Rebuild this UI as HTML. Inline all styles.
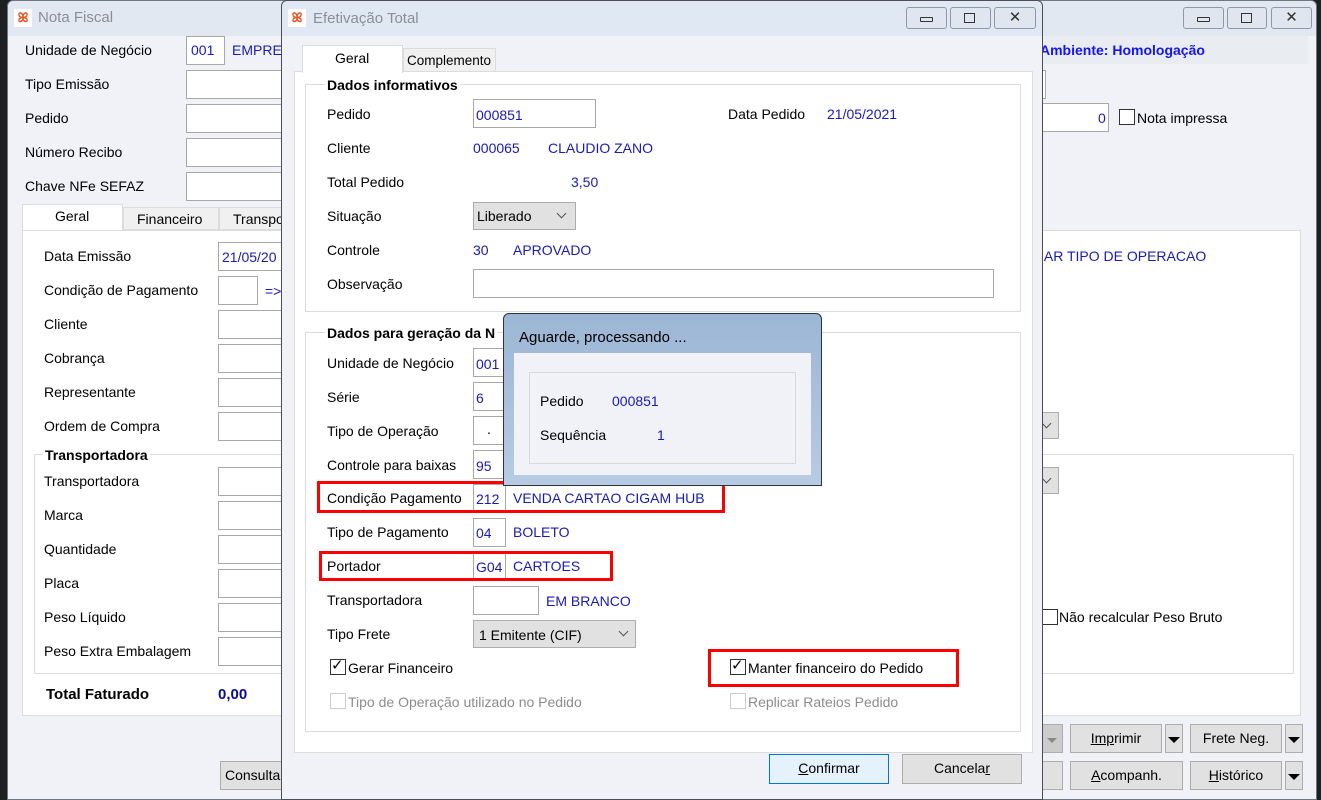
<!DOCTYPE html>
<html><head><meta charset="utf-8">
<style>
*{margin:0;padding:0;box-sizing:border-box}
body{width:1321px;height:800px;overflow:hidden;background:#1d1f22;font-family:"Liberation Sans",sans-serif;font-size:14px;color:#000;position:relative}
div{position:absolute}
.t{line-height:18px;white-space:nowrap}
.b{color:#1a1ab4}
.in{background:#fff;border:1px solid #a8a8a8}
.bt{background:#e1e1e1;border:1px solid #adadad;text-align:center;line-height:26px}
.cb{width:16px;height:16px;border:1px solid #333;background:#fff}
.red{border:3px solid #f00}
.grp{border:1px solid #dcdcdc}
.gt{font-weight:bold;background:#fff;padding:0 2px;line-height:18px}
.combo{background:#e1e1e1;border:1px solid #adadad}
.arr{width:7px;height:7px;border-right:1.5px solid #555;border-bottom:1.5px solid #555;transform:rotate(45deg)}
.dis{color:#8c8c8c}
.tri{width:0;height:0;border-left:6px solid transparent;border-right:6px solid transparent;border-top:6px solid #000}
</style></head><body>

<div style="left:7px;top:0;width:1310px;height:800px;background:#f0f2f8;border:1px solid #6f7780;border-radius:6px 6px 0 0"></div>
<div style="left:8px;top:1px;width:1308px;height:35px;background:#e1e8f2;border-radius:6px 6px 0 0"></div>
<div style="left:14px;top:9px;width:18px;height:18px;background:#fff;color:#e8501e;font-size:13px;font-weight:bold;text-align:center;line-height:18px">ꕤ</div>
<div class="t" style="left:38px;top:9px;color:#8a8f96;font-size:15px">Nota Fiscal</div>
<div style="left:1183px;top:7px;width:41px;height:22px;background:#dfe6ef;border:1px solid #8d99a8;border-radius:3px"><div style="left:13px;top:9px;width:13px;height:5px;border:1.5px solid #333;border-radius:1px"></div></div>
<div style="left:1227px;top:7px;width:40px;height:22px;background:#dfe6ef;border:1px solid #8d99a8;border-radius:3px"><div style="left:13px;top:5px;width:11px;height:10px;border:1.5px solid #333"></div></div>
<div style="left:1271px;top:7px;width:41px;height:22px;background:#dfe6ef;border:1px solid #8d99a8;border-radius:3px;text-align:center;font-size:15px;line-height:20px;color:#333">✕</div>

<div class="t" style="left:25px;top:41px">Unidade de Negócio</div>
<div class="t" style="left:25px;top:75px">Tipo Emissão</div>
<div class="t" style="left:25px;top:109px">Pedido</div>
<div class="t" style="left:25px;top:143px">Número Recibo</div>
<div class="t" style="left:25px;top:177px">Chave NFe SEFAZ</div>
<div class="in" style="left:186px;top:36px;width:39px;height:29px"></div>
<div class="t b" style="left:191px;top:41px">001</div>
<div class="t b" style="left:232px;top:41px">EMPRES</div>
<div class="in" style="left:186px;top:70px;width:100px;height:29px"></div>
<div class="in" style="left:186px;top:104px;width:100px;height:29px"></div>
<div class="in" style="left:186px;top:138px;width:100px;height:29px"></div>
<div class="in" style="left:186px;top:172px;width:100px;height:29px"></div>

<div style="left:1040px;top:36px;width:268px;height:28px;background:#e9ecf1"></div>
<div class="t" style="left:1040px;top:41px;color:#1414f0;font-weight:bold">Ambiente: Homologação</div>
<div class="in" style="left:1030px;top:70px;width:16px;height:29px"></div>
<div class="in" style="left:1030px;top:103px;width:79px;height:29px"></div>
<div class="t b" style="left:1098px;top:109px">0</div>
<div class="cb" style="left:1119px;top:109px"></div>
<div class="t" style="left:1137px;top:109px">Nota impressa</div>

<div style="left:22px;top:204px;width:101px;height:28px;background:#fff;border:1px solid #dcdcdc;border-bottom:none"></div>
<div class="t" style="left:55px;top:207px">Geral</div>
<div style="left:123px;top:207px;width:96px;height:23px;background:#f0f0f0;border:1px solid #dcdcdc"></div>
<div class="t" style="left:137px;top:210px">Financeiro</div>
<div style="left:219px;top:207px;width:70px;height:23px;background:#f0f0f0;border:1px solid #dcdcdc"></div>
<div class="t" style="left:233px;top:210px">Transpo</div>
<div style="left:22px;top:230px;width:1279px;height:486px;background:#fff;border:1px solid #dcdcdc"></div>

<div class="t" style="left:44px;top:247px">Data Emissão</div>
<div class="t" style="left:44px;top:281px">Condição de Pagamento</div>
<div class="t" style="left:44px;top:315px">Cliente</div>
<div class="t" style="left:44px;top:349px">Cobrança</div>
<div class="t" style="left:44px;top:383px">Representante</div>
<div class="t" style="left:44px;top:417px">Ordem de Compra</div>
<div class="in" style="left:218px;top:242px;width:70px;height:29px"></div>
<div class="t b" style="left:222px;top:248px">21/05/20</div>
<div class="in" style="left:218px;top:276px;width:40px;height:29px"></div>
<div class="t b" style="left:265px;top:282px">=></div>
<div class="in" style="left:218px;top:310px;width:70px;height:29px"></div>
<div class="in" style="left:218px;top:344px;width:70px;height:29px"></div>
<div class="in" style="left:218px;top:378px;width:70px;height:29px"></div>
<div class="in" style="left:218px;top:412px;width:70px;height:29px"></div>
<div class="t b" style="left:1040px;top:247px">IAR TIPO DE OPERACAO</div>
<div class="combo" style="left:1030px;top:412px;width:29px;height:27px"><div class="arr" style="left:12px;top:7px"></div></div>

<div class="grp" style="left:34px;top:454px;width:1260px;height:220px"></div>
<div class="gt" style="left:43px;top:446px">Transportadora</div>
<div class="combo" style="left:1030px;top:467px;width:29px;height:27px"><div class="arr" style="left:12px;top:7px"></div></div>
<div class="t" style="left:44px;top:472px">Transportadora</div>
<div class="t" style="left:44px;top:506px">Marca</div>
<div class="t" style="left:44px;top:540px">Quantidade</div>
<div class="t" style="left:44px;top:574px">Placa</div>
<div class="t" style="left:44px;top:608px">Peso Líquido</div>
<div class="t" style="left:44px;top:642px">Peso Extra Embalagem</div>
<div class="in" style="left:218px;top:467px;width:70px;height:29px"></div>
<div class="in" style="left:218px;top:501px;width:70px;height:29px"></div>
<div class="in" style="left:218px;top:535px;width:70px;height:29px"></div>
<div class="in" style="left:218px;top:569px;width:70px;height:29px"></div>
<div class="in" style="left:218px;top:603px;width:70px;height:29px"></div>
<div class="in" style="left:218px;top:637px;width:70px;height:29px"></div>
<div class="cb" style="left:1042px;top:609px"></div>
<div class="t" style="left:1059px;top:608px">Não recalcular Peso Bruto</div>
<div class="t" style="left:46px;top:686px;font-weight:bold;font-size:15px">Total Faturado</div>
<div class="t" style="left:218px;top:686px;font-weight:bold;color:#0a0a96;font-size:15px">0,00</div>

<div class="bt" style="left:220px;top:761px;width:80px;height:29px;text-align:left;padding-left:4px">Consulta</div>
<div class="bt" style="left:1030px;top:724px;width:33px;height:29px;background:#ccc"><div style="left:16px;top:13px;border-left:5px solid transparent;border-right:5px solid transparent;border-top:5px solid #888"></div></div>
<div class="bt" style="left:1070px;top:724px;width:92px;height:29px"><u>Imp</u>rimir</div>
<div class="bt" style="left:1165px;top:724px;width:18px;height:29px"><div class="tri" style="left:2px;top:12px"></div></div>
<div class="bt" style="left:1190px;top:724px;width:92px;height:29px">Frete Ne<u>g</u>.</div>
<div class="bt" style="left:1285px;top:724px;width:18px;height:29px"><div class="tri" style="left:2px;top:12px"></div></div>
<div class="bt" style="left:1030px;top:761px;width:33px;height:29px"></div>
<div class="bt" style="left:1070px;top:761px;width:113px;height:29px"><u>A</u>companh.</div>
<div class="bt" style="left:1190px;top:761px;width:92px;height:29px"><u>H</u>istórico</div>
<div class="bt" style="left:1285px;top:761px;width:18px;height:29px"><div class="tri" style="left:2px;top:12px"></div></div>

<!-- dialog -->
<div style="left:281px;top:0;width:762px;height:800px;background:#f0f2f8;border:1px solid #4b4f55;border-radius:6px 6px 0 0"></div>
<div style="left:282px;top:1px;width:760px;height:35px;background:#e0e8f3;border-radius:6px 6px 0 0"></div>
<div style="left:288px;top:9px;width:18px;height:18px;background:#fff;color:#e8501e;font-size:13px;font-weight:bold;text-align:center;line-height:18px">ꕤ</div>
<div class="t" style="left:313px;top:10px;color:#8a8f96;font-size:15px">Efetivação Total</div>
<div style="left:906px;top:7px;width:41px;height:22px;background:#dfe6ef;border:1px solid #8d99a8;border-radius:3px"><div style="left:13px;top:9px;width:13px;height:5px;border:1.5px solid #333;border-radius:1px"></div></div>
<div style="left:950px;top:7px;width:41px;height:22px;background:#dfe6ef;border:1px solid #8d99a8;border-radius:3px"><div style="left:13px;top:5px;width:11px;height:10px;border:1.5px solid #333"></div></div>
<div style="left:994px;top:7px;width:42px;height:22px;background:#dfe6ef;border:1px solid #8d99a8;border-radius:3px;text-align:center;font-size:15px;line-height:20px;color:#333">✕</div>

<div style="left:294px;top:71px;width:739px;height:682px;background:#fff;border:1px solid #dcdcdc"></div>
<div style="left:302px;top:45px;width:101px;height:28px;background:#fff;border:1px solid #dcdcdc;border-bottom:none"></div>
<div class="t" style="left:335px;top:49px">Geral</div>
<div style="left:403px;top:48px;width:93px;height:24px;background:#f0f0f0;border:1px solid #dcdcdc"></div>
<div class="t" style="left:407px;top:52px;font-size:13.5px">Complemento</div>

<div class="grp" style="left:305px;top:84px;width:716px;height:228px"></div>
<div class="gt" style="left:325px;top:76px">Dados informativos</div>
<div class="t" style="left:327px;top:105px">Pedido</div>
<div class="t" style="left:327px;top:139px">Cliente</div>
<div class="t" style="left:327px;top:173px">Total Pedido</div>
<div class="t" style="left:327px;top:207px">Situação</div>
<div class="t" style="left:327px;top:241px">Controle</div>
<div class="t" style="left:327px;top:275px">Observação</div>
<div class="in" style="left:473px;top:99px;width:123px;height:29px"></div>
<div class="t b" style="left:476px;top:106px">000851</div>
<div class="t" style="left:728px;top:105px">Data Pedido</div>
<div class="t b" style="left:827px;top:105px">21/05/2021</div>
<div class="t b" style="left:473px;top:139px">000065</div>
<div class="t b" style="left:548px;top:139px">CLAUDIO ZANO</div>
<div class="t b" style="left:571px;top:173px">3,50</div>
<div class="combo" style="left:473px;top:202px;width:103px;height:28px"><div class="t" style="left:3px;top:4px">Liberado</div><div class="arr" style="left:84px;top:7px"></div></div>
<div class="t b" style="left:473px;top:241px">30</div>
<div class="t b" style="left:513px;top:241px">APROVADO</div>
<div class="in" style="left:473px;top:269px;width:521px;height:29px"></div>

<div class="grp" style="left:305px;top:332px;width:716px;height:400px"></div>
<div class="gt" style="left:325px;top:324px">Dados para geração da N</div>
<div class="t" style="left:327px;top:354px">Unidade de Negócio</div>
<div class="t" style="left:327px;top:388px">Série</div>
<div class="t" style="left:327px;top:422px">Tipo de Operação</div>
<div class="t" style="left:327px;top:456px">Controle para baixas</div>
<div class="t" style="left:327px;top:489px">Condição Pagamento</div>
<div class="t" style="left:327px;top:523px">Tipo de Pagamento</div>
<div class="t" style="left:327px;top:557px">Portador</div>
<div class="t" style="left:327px;top:591px">Transportadora</div>
<div class="t" style="left:327px;top:625px">Tipo Frete</div>
<div class="in" style="left:473px;top:348px;width:33px;height:29px"></div><div class="t b" style="left:476px;top:355px">001</div>
<div class="in" style="left:473px;top:382px;width:33px;height:29px"></div><div class="t b" style="left:476px;top:389px">6</div>
<div class="in" style="left:473px;top:416px;width:33px;height:29px"></div><div class="t" style="left:487px;top:420px">.</div>
<div class="in" style="left:473px;top:450px;width:33px;height:29px"></div><div class="t b" style="left:476px;top:457px">95</div>
<div class="in" style="left:473px;top:484px;width:33px;height:29px"></div><div class="t b" style="left:476px;top:490px">212</div>
<div class="t b" style="left:513px;top:489px">VENDA CARTAO CIGAM HUB</div>
<div class="in" style="left:473px;top:518px;width:33px;height:29px"></div><div class="t b" style="left:476px;top:524px">04</div>
<div class="t b" style="left:513px;top:523px">BOLETO</div>
<div class="in" style="left:473px;top:552px;width:33px;height:29px"></div><div class="t b" style="left:476px;top:558px">G04</div>
<div class="t b" style="left:513px;top:557px">CARTOES</div>
<div class="in" style="left:473px;top:586px;width:66px;height:29px"></div>
<div class="t b" style="left:546px;top:592px">EM BRANCO</div>
<div class="combo" style="left:473px;top:620px;width:163px;height:28px"><div class="t" style="left:5px;top:5px">1 Emitente (CIF)</div><div class="arr" style="left:146px;top:7px"></div></div>
<div class="red" style="left:317px;top:481px;width:408px;height:32px"></div>
<div class="red" style="left:319px;top:551px;width:294px;height:30px"></div>

<div class="cb" style="left:330px;top:659px"></div><div class="t" style="left:331px;top:657px;font-size:15px">✓</div>
<div class="t" style="left:348px;top:659px">Gerar Financeiro</div>
<div class="cb" style="left:730px;top:659px"></div><div class="t" style="left:731px;top:657px;font-size:15px">✓</div>
<div class="t" style="left:748px;top:659px">Manter financeiro do Pedido</div>
<div class="red" style="left:708px;top:649px;width:251px;height:38px"></div>
<div class="cb" style="left:330px;top:693px;border-color:#ccc"></div>
<div class="t dis" style="left:348px;top:693px">Tipo de Operação utilizado no Pedido</div>
<div class="cb" style="left:730px;top:693px;border-color:#ccc"></div>
<div class="t dis" style="left:748px;top:693px">Replicar Rateios Pedido</div>

<div class="bt" style="left:769px;top:754px;width:120px;height:30px;background:#e5f1fb;border-color:#0078d7"><u>C</u>onfirmar</div>
<div class="bt" style="left:902px;top:754px;width:120px;height:30px">Cancela<u>r</u></div>

<!-- popup -->
<div style="left:503px;top:313px;width:319px;height:173px;background:linear-gradient(#9cb6d5,#b7cbe3);border:1px solid #2c3440;border-radius:6px 6px 0 0"></div>
<div class="t" style="left:519px;top:329px;font-size:15px">Aguarde, processando ...</div>
<div style="left:514px;top:353px;width:297px;height:122px;background:#f0f2f8"></div>
<div style="left:529px;top:372px;width:267px;height:92px;border:1px solid #d8d8d8"></div>
<div class="t" style="left:540px;top:392px">Pedido</div>
<div class="t b" style="left:612px;top:392px">000851</div>
<div class="t" style="left:540px;top:426px">Sequência</div>
<div class="t b" style="left:657px;top:426px">1</div>
</body></html>
